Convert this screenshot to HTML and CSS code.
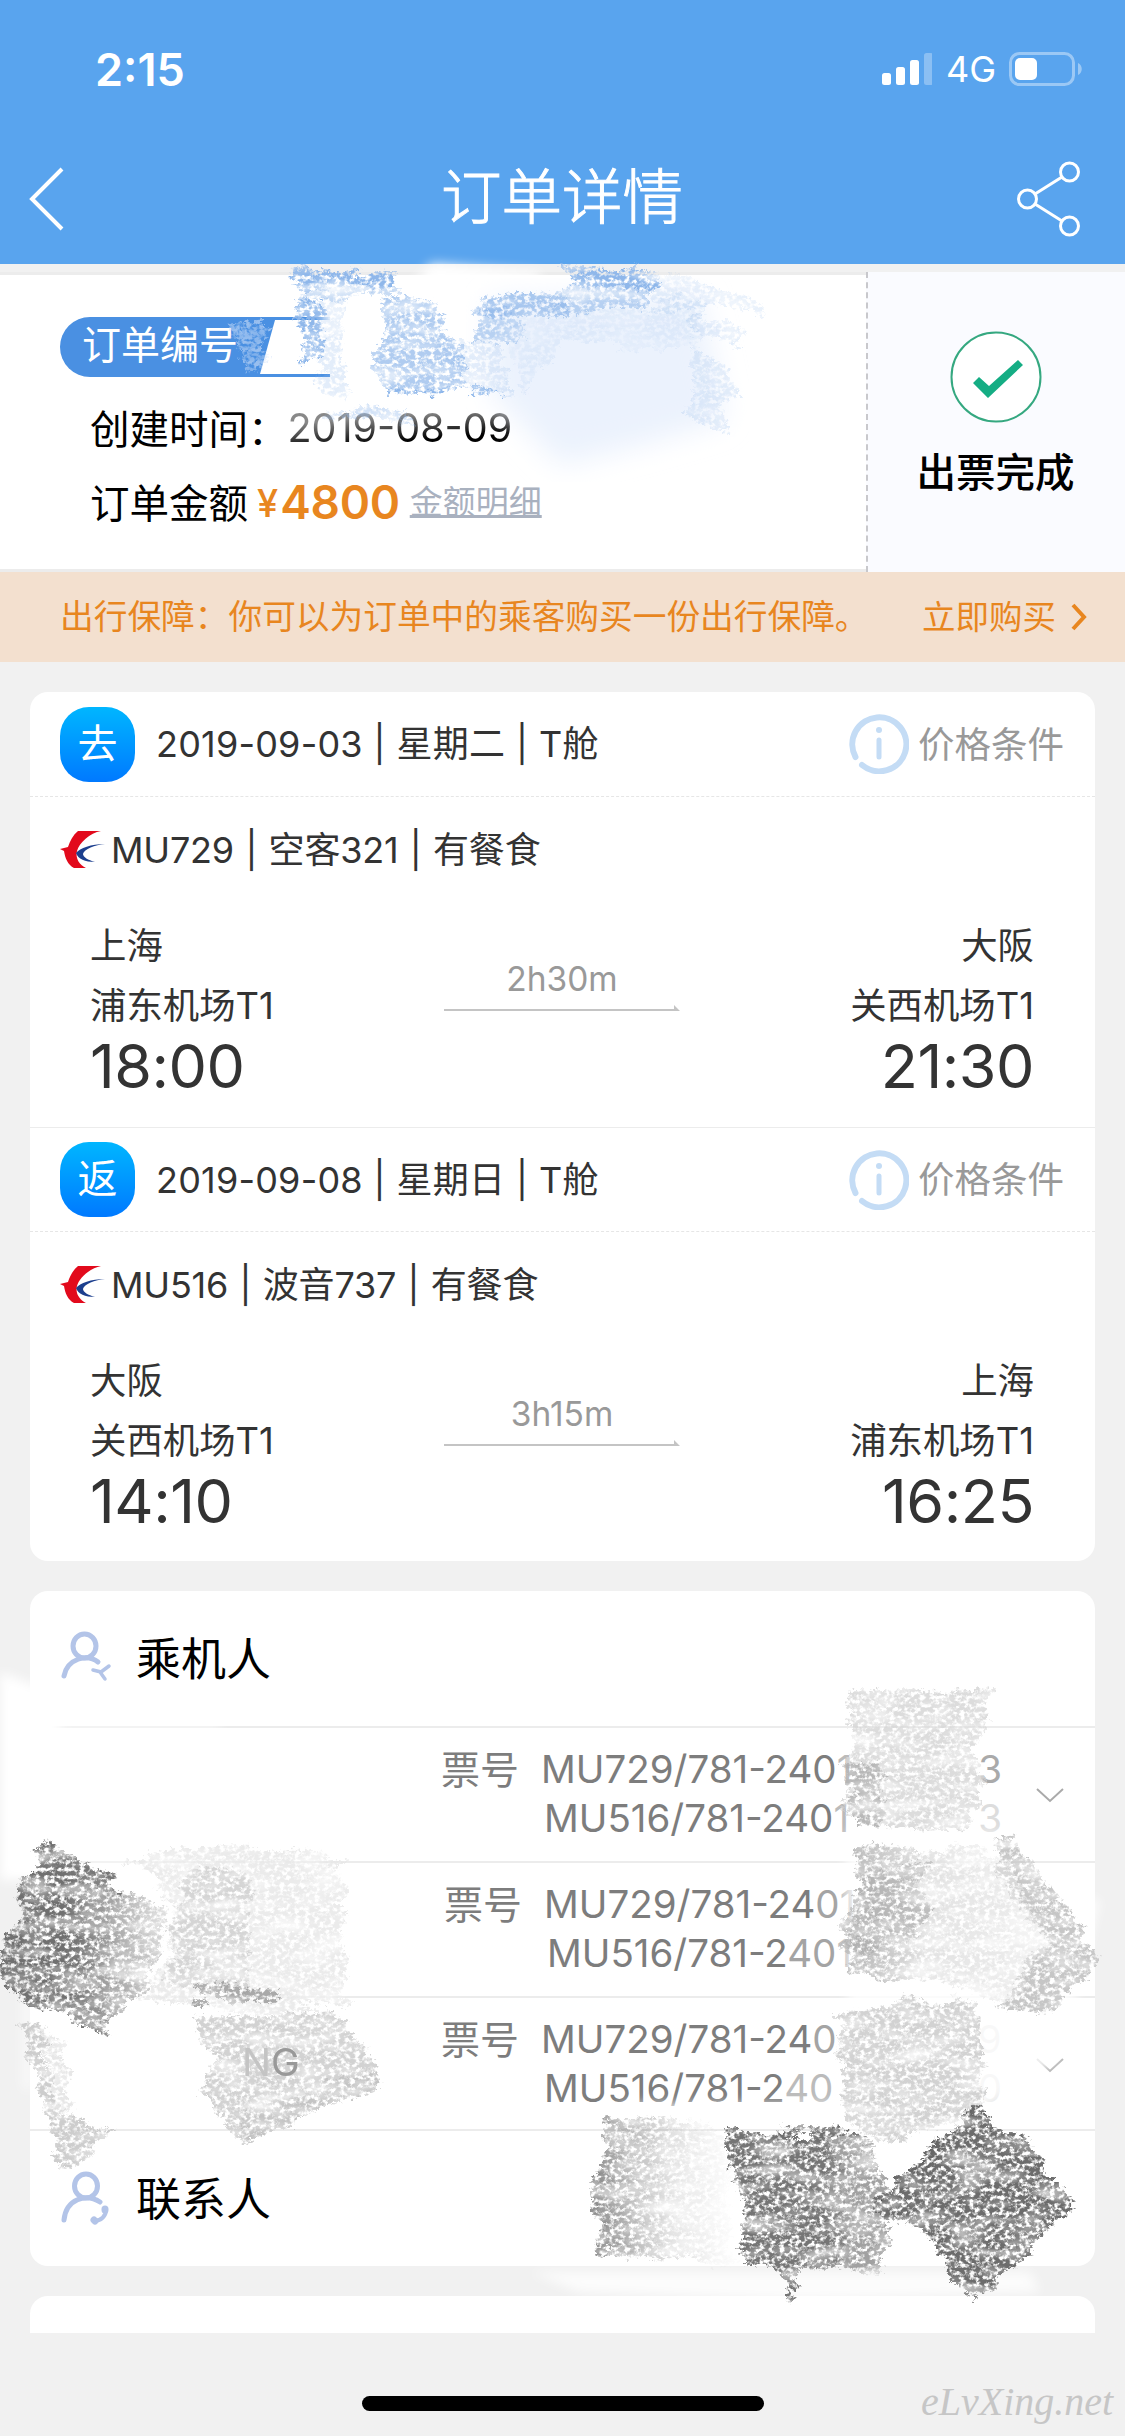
FILE: index.html
```html
<!DOCTYPE html>
<html lang="zh-CN">
<head>
    <meta charset="UTF-8">
    <meta name="viewport" content="width=device-width, initial-scale=1.0">
    <title>订单详情</title>
    <link rel="stylesheet" href="styles.css">
</head>
<body>
    <header class="header">
        <div class="status-bar">
            <span class="status-time">2:15</span>
            <div class="status-icons">
                <svg width="50" height="32" viewBox="0 0 50 32" fill="#fff">
                    <rect x="0" y="20" width="9" height="12" rx="2.5"/>
                    <rect x="14" y="14" width="9" height="18" rx="2.5"/>
                    <rect x="28" y="7" width="9" height="25" rx="2.5"/>
                    <rect x="42" y="0" width="9" height="32" rx="2.5" opacity="0.3"/>
                </svg>
                <span class="status-network">4G</span>
                <svg class="battery" width="74" height="34" viewBox="0 0 74 34">
                    <rect x="1.5" y="1.5" width="63" height="31" rx="9" fill="none" stroke="#fff" stroke-opacity="0.4" stroke-width="3"/>
                    <rect x="6" y="6" width="22" height="22" rx="5" fill="#fff"/>
                    <path d="M69 11c5 2 5 10 0 12z" fill="#fff" opacity="0.4"/>
                </svg>
            </div>
        </div>
        <div class="nav-bar">
            <svg width="36" height="64" viewBox="0 0 36 64" fill="none" stroke="#fff" stroke-width="4">
                <path d="M33 2 3 32l30 30"/>
            </svg>
            <h1>订单详情</h1>
            <svg width="64" height="76" viewBox="0 0 64 76" fill="none" stroke="#fff" stroke-width="3">
                <circle cx="10.500" cy="38" r="9"/>
                <circle cx="52.500" cy="11" r="9"/>
                <circle cx="52.500" cy="65" r="9"/>
                <path d="m18 33 27-17M18 43l27 17"/>
            </svg>
        </div>
    </header>

    <section class="summary">
        <div class="summary-info">
            <div class="order-no"><span>订单编号</span><div class="order-no-value"></div></div>
            <div class="summary-row">创建时间：<span class="created">2019-08-09</span></div>
            <div class="summary-row amount-row">订单金额<span class="yen">¥</span><span class="amount">4800</span><a class="detail-link">金额明细</a></div>
        </div>
        <div class="summary-status">
            <svg width="92" height="92" viewBox="0 0 92 92">
                <circle cx="46" cy="46" r="44.500" fill="#fff" stroke="#35a880" stroke-width="2"/>
                <path d="M23 52l6-6 10 9 29-26 5 5-35 33z" fill="#15ad84"/>
            </svg>
            <strong>出票完成</strong>
        </div>
    </section>

    <div class="insurance">
        <span>出行保障：你可以为订单中的乘客购买一份出行保障。</span>
        <span class="buy">立即购买</span>
        <svg width="16" height="28" viewBox="0 0 16 28" fill="none" stroke="#e8861f" stroke-width="4">
            <path d="m2 2 11 12L2 26"/>
        </svg>
    </div>

    <!-- 航段 -->
    <section class="card">
        <div class="leg">
            <div class="leg-header">
                <span class="badge">去</span>
                <span class="leg-date">2019-09-03 | 星期二 | T舱</span>
                <svg class="info-icon" width="60" height="60" viewBox="0 0 60 60" fill="none" stroke="#c4dcf5" stroke-width="6" stroke-linecap="round">
                    <path d="M6.500 43A27 27 0 1 1 13 51"/>
                    <path d="M30 26v17" stroke-width="5"/>
                    <path d="M30 16v.1"/>
                </svg>
                <span class="price-rule">价格条件</span>
            </div>
            <div class="flight">
                <svg width="46" height="38" viewBox="0 0 46 38">
                    <path d="M18 0h23C30 2 19 12 17 20s3 14 9 17H14C8 34 5 27 4 20l-4-2 8-2C10 10 13 4 18 0z" fill="#e20a1c"/>
                    <path d="M45 13C31 13 20 17 16 22c2 6 9 9 19 9-7-2-12-5-12-8 1-5 12-9 22-10z" fill="#1c3f8e"/>
                </svg>
                <span>MU729 | 空客321 | 有餐食</span>
            </div>
            <div class="route">
                <div class="place">
                    <div class="airport">上海</div>
                    <div class="airport">浦东机场T1</div>
                    <div class="clock">18:00</div>
                </div>
                <div class="duration">
                    <span>2h30m</span>
                    <svg width="236" height="6" viewBox="0 0 236 6" fill="#c4c4c4"><path d="M0 4h230V0l6 6H0z"/></svg>
                </div>
                <div class="place place-to">
                    <div class="airport">大阪</div>
                    <div class="airport">关西机场T1</div>
                    <div class="clock">21:30</div>
                </div>
            </div>
        </div>
        <div class="leg">
            <div class="leg-header">
                <span class="badge">返</span>
                <span class="leg-date">2019-09-08 | 星期日 | T舱</span>
                <svg class="info-icon" width="60" height="60" viewBox="0 0 60 60" fill="none" stroke="#c4dcf5" stroke-width="6" stroke-linecap="round">
                    <path d="M6.500 43A27 27 0 1 1 13 51"/>
                    <path d="M30 26v17" stroke-width="5"/>
                    <path d="M30 16v.1"/>
                </svg>
                <span class="price-rule">价格条件</span>
            </div>
            <div class="flight">
                <svg width="46" height="38" viewBox="0 0 46 38">
                    <path d="M18 0h23C30 2 19 12 17 20s3 14 9 17H14C8 34 5 27 4 20l-4-2 8-2C10 10 13 4 18 0z" fill="#e20a1c"/>
                    <path d="M45 13C31 13 20 17 16 22c2 6 9 9 19 9-7-2-12-5-12-8 1-5 12-9 22-10z" fill="#1c3f8e"/>
                </svg>
                <span>MU516 | 波音737 | 有餐食</span>
            </div>
            <div class="route">
                <div class="place">
                    <div class="airport">大阪</div>
                    <div class="airport">关西机场T1</div>
                    <div class="clock">14:10</div>
                </div>
                <div class="duration">
                    <span>3h15m</span>
                    <svg width="236" height="6" viewBox="0 0 236 6" fill="#c4c4c4"><path d="M0 4h230V0l6 6H0z"/></svg>
                </div>
                <div class="place place-to">
                    <div class="airport">上海</div>
                    <div class="airport">浦东机场T1</div>
                    <div class="clock">16:25</div>
                </div>
            </div>
        </div>
    </section>

    <!-- 乘机人 / 联系人 -->
    <section class="card people">
        <div class="people-title">
            <svg width="52" height="54" viewBox="0 0 52 54" fill="none" stroke="#b3c4e8" stroke-width="5" stroke-linecap="round">
                <ellipse cx="24.500" cy="15" rx="11.500" ry="12"/>
                <path d="M4 45C7 28 27 22 38 31"/>
                <path d="M33 39l8 2 8-6M40 41l5 7" stroke-width="3.500"/>
            </svg>
            <h2>乘机人</h2>
        </div>
        <div class="ticket">
            <span class="ticket-label">票号</span>
            <div class="ticket-no"><div>MU729/781-240<i>1</i></div><div>MU516/781-240<i>1</i></div></div>
            <div class="ticket-tail"><div>3</div><div class="faint">3</div></div>
            <svg width="28" height="15" viewBox="0 0 28 15" fill="none" stroke="#aaa" stroke-width="2"><path d="m1 1 13 12L27 1"/></svg>
        </div>
        <div class="ticket ticket-shift">
            <span class="ticket-label">票号</span>
            <div class="ticket-no"><div>MU729/781-24<em>0</em><i>1</i></div><div>MU516/781-2<em>40</em><i>1</i></div></div>
        </div>
        <div class="ticket">
            <span class="passenger">N<b>G</b></span>
            <span class="ticket-label">票号</span>
            <div class="ticket-no"><div>MU729/781-24<em>0</em></div><div>MU516/781-2<i>40</i></div></div>
            <div class="ticket-tail faint"><div>9</div><div class="faint">0</div></div>
            <svg width="28" height="15" viewBox="0 0 28 15" fill="none" stroke="#aaa" stroke-width="2"><path d="m1 1 13 12L27 1"/></svg>
        </div>
        <div class="people-title">
            <svg width="52" height="54" viewBox="0 0 52 54" fill="none" stroke="#b3c4e8" stroke-width="5" stroke-linecap="round">
                <ellipse cx="26" cy="15" rx="11.500" ry="12"/>
                <path d="M4 49C6 28 26 22 40 31"/>
                <path d="M46 39c0 6-5 11-12 11" stroke-width="4"/>
                <path d="M45 38v1M34 49l1 1" stroke-width="7"/>
            </svg>
            <h2>联系人</h2>
        </div>
    </section>

    <section class="card card-cut"></section>

    <footer>
        <div class="home-bar"></div>
        <span class="watermark">eLvXing.net</span>
    </footer>

    <!-- 涂抹遮挡 -->
    <svg class="smudges" width="1125" height="2436" viewBox="0 0 1125 2436">
        <defs>
            <filter id="chalk" x="-5%" y="-5%" width="110%" height="110%" color-interpolation-filters="sRGB">
                <feTurbulence type="fractalNoise" baseFrequency="0.02 0.06" numOctaves="3" seed="4" result="wide"/>
                <feTurbulence type="fractalNoise" baseFrequency="0.2 0.25" numOctaves="4" seed="7" result="grain"/>
                <feDisplacementMap in="SourceGraphic" in2="wide" scale="26" xChannelSelector="R" yChannelSelector="G" result="edge"/>
                <feDisplacementMap in="edge" in2="grain" scale="12" xChannelSelector="R" yChannelSelector="G" result="edge2"/>
                <feColorMatrix in="grain" values="0 0 0 0 0  0 0 0 0 0  0 0 0 0 0  0 0 0 4 -1.25" result="m1"/>
                <feColorMatrix in="wide" values="0 0 0 0 0  0 0 0 0 0  0 0 0 0 0  0 0 0 1.8 0" result="m2"/>
                <feComposite in="edge2" in2="m1" operator="in" result="c"/>
                <feComposite in="c" in2="m2" operator="in"/>
            </filter>
            <filter id="haze" x="-10%" y="-10%" width="120%" height="120%">
                <feGaussianBlur stdDeviation="6"/>
            </filter>
            <filter id="wash" x="-10%" y="-10%" width="120%" height="120%">
                <feGaussianBlur stdDeviation="14"/>
            </filter>
            <linearGradient id="fadeRight">
                <stop offset="0" stop-opacity="1" stop-color="#858585"/>
                <stop offset="0.5" stop-opacity="0.4" stop-color="#9c9c9c"/>
                <stop offset="1" stop-opacity="0.03" stop-color="#bbb"/>
            </linearGradient>
            <linearGradient id="fadeDark">
                <stop offset="0.4" stop-color="#707070"/>
                <stop offset="1" stop-color="#8a8a8a" stop-opacity="0.3"/>
            </linearGradient>
            <linearGradient id="fadeLight">
                <stop offset="0.1" stop-color="#bdbdbd"/>
                <stop offset="0.6" stop-color="#dcdcdc" stop-opacity="0.7"/>
                <stop offset="1" stop-color="#e6e6e6" stop-opacity="0.3"/>
            </linearGradient>
        </defs>

        <g filter="url(#haze)" fill="#fff">
            <path d="M432 264 540 273V296H400z"/>
            <path d="M320 305H480L500 400 345 408z"/>
            <path d="M0 1672 60 1695V1880H0z"/>
            <path d="M22 1960h10v130H22z" opacity="0.6"/>
            <path d="M530 2272H1030L1040 2292 800 2300 580 2292z" opacity="0.8"/>
            <path d="M220 1725H36V1731H220zM320 1860H36V1866H320zM340 1993H36V2001H340z"/>
            <path d="M60 1688h56v14H60z"/>
            <path d="M620 2105H860V2118H620z"/>
            <path d="M845 1833H1000L1010 1880 1100 1900 1060 2060 980 2112 870 2150H850z" opacity="0.8"/>
        </g>
        <g filter="url(#wash)">
            <path d="M490 300 700 295 725 420 640 445 560 465 490 390z" fill="#ebf2fd"/>
        </g>
        <g filter="url(#chalk)" fill="#8fb7ea">
            <path d="M293 266 395 274 394 284 296 290z"/>
            <path d="M296 285 394 284 394 294 300 300z" opacity="0.5"/>
            <path d="M297 298 315 305 324 345 318 362 302 362 308 340 300 320z" stroke="#8fb7ea" stroke-width="4"/>
            <path d="M318 296 340 298 345 400 320 385z" opacity="0.25"/>
            <path d="M382 297 440 298 445 340 465 350 470 392 382 390 374 345 386 335z" opacity="0.7"/>
            <path d="M440 340 500 345 510 394 460 392z" opacity="0.25"/>
            <path d="M478 297 500 297 525 340 476 345z" opacity="0.6"/>
            <path d="M480 295 575 297 560 318 485 318z" opacity="0.75"/>
            <path d="M560 269 661 268 661 286 590 290 572 284z"/>
            <path d="M572 284 661 286 640 304 570 312 560 300z" opacity="0.6"/>
            <path d="M661 270 720 285 760 305 758 312 720 305 650 310z" opacity="0.2"/>
            <path d="M690 312 745 330 738 348 700 345z" opacity="0.25"/>
            <path d="M690 345 727 365 735 395 720 410 728 432 710 432 690 420z" opacity="0.22"/>
            <path d="M500 318 700 300 700 350 560 345 520 390z" opacity="0.14"/>
            <path d="M325 408 400 412 425 425 330 418z" opacity="0.4"/>
            <path d="M382 388 500 394V397L382 394z"/>
        </g>
        <g filter="url(#chalk)" fill="#cfe0f8">
            <path d="M226 325 272 320 258 377 248 372z" opacity="0.6"/>
        </g>

        <g filter="url(#chalk)">
            <path d="M34 1847 43 1842 125 1890 165 1910 158 1950 148 1985 125 2000 112 2020 108 2035 60 2012 15 1995 0 1970 3 1940 25 1910 18 1885 36 1870z" fill="url(#fadeDark)"/>
            <path d="M36 1844 125 1890 123 1897 38 1858z" fill="#777"/>
            <path d="M14 1990 108 2026 108 2035 60 2014z" fill="#777"/>
            <path d="M175 1845 300 1848 342 1865 345 1990 350 2005 250 2012 190 1998 133 2002 165 1970 170 1910 150 1870 122 1868z" fill="#e6e6e6" opacity="0.8"/>
            <path d="M190 1870 250 1875 248 1990 170 1985 172 1910z" fill="#ccc" opacity="0.7"/>
            <path d="M190 1985 275 1986 280 2000 195 2000z" fill="#999" opacity="0.8"/>
            <path d="M20 2028 40 2022 45 2060 62 2115 118 2130 95 2150 72 2168 60 2168 42 2100z" fill="#c0c0c0" opacity="0.8"/>
            <path d="M40 2030 62 2040 75 2110 60 2115z" fill="#ddd" opacity="0.7"/>
            <path d="M190 2018 330 2010 365 2050 382 2085 330 2105 247 2142 222 2113 205 2090 215 2060z" fill="#d2d2d2"/>
            <path d="M240 2115 375 2072 382 2085 330 2105 247 2142z" fill="#c4c4c4"/>
            <path d="M845 1692 950 1687 990 1692 985 1730 975 1755 985 1780 970 1828 855 1830 842 1795 855 1740z" fill="#d6d6d6" opacity="0.85"/>
            <path d="M842 1760 880 1765 882 1825 855 1830z" fill="#aaa" opacity="0.7"/>
            <path d="M855 1843 960 1848 1010 1860 1005 1985 850 1978 842 1930 860 1880z" fill="url(#fadeLight)"/>
            <path d="M860 1870 928 1865 920 1935 850 1950z" fill="#aaa" opacity="0.6"/>
            <path d="M1000 1840 1013 1838 1097 1955 1085 1975 1072 1995 1055 2010 1000 2012 1030 1960 1045 1940 995 1870z" fill="#c0c0c0" opacity="0.9"/>
            <path d="M920 1870 1010 1860 1050 1950 1010 2005 930 1980z" fill="#e2e2e2" opacity="0.6"/>
            <path d="M840 2015 905 1998 975 2005 980 2060 983 2110 900 2140 845 2120z" fill="#cdcdcd" opacity="0.9"/>
            <path d="M603 2115 710 2121 725 2150 730 2265 597 2250 600 2230 587 2180 607 2160z" fill="url(#fadeRight)"/>
            <path d="M726 2131 820 2133 845 2180 842 2225 840 2270 800 2273 792 2305 782 2270 740 2260 742 2225 745 2190 730 2180z" fill="#757575"/>
            <path d="M820 2133 872 2133 885 2180 890 2225 885 2275 840 2272z" fill="#8a8a8a" opacity="0.8"/>
            <path d="M726 2131 870 2133 870 2139 728 2141z" fill="#6f6f6f"/>
            <path d="M978 2107 1000 2130 1036 2143 1045 2170 1077 2195 1005 2275 980 2297 965 2290 940 2260 940 2240 910 2230 875 2215 877 2205z" fill="#6c6c6c"/>
            <path d="M980 2107 875 2213 880 2200z" stroke="#666" stroke-width="5"/>
        </g>
    </svg>
</body>
</html>
```
FILE: styles.css
```css
:root {
    --blue: #59a4ee;
    --orange: #e8861f;
    --bg: #f1f1f1;
    --line: #ececec;
}

* {
    box-sizing: border-box;
}

body {
    margin: 0;
    width: 1125px;
    height: 2436px;
    overflow: hidden;
    position: relative;
    background: var(--bg);
    color: #333;
    font-family: Inter, "Noto Sans CJK SC", sans-serif;
    font-size: 36px;
}

svg {
    flex: none;
}

.header {
    height: 264px;
    background: var(--blue);
    color: #fff;
}

.status-bar {
    display: flex;
    justify-content: space-between;
    align-items: center;
    height: 138px;
    padding: 0 42px 0 95px;
}

.status-time {
    font-size: 45px;
    font-weight: 600;
}

.status-icons {
    display: flex;
    align-items: center;
}

.status-network {
    margin: 0 14px 0 14px;
    width: 49px;
    font-size: 36px;
    font-weight: 400;
}

.nav-bar {
    display: flex;
    justify-content: space-between;
    align-items: center;
    height: 122px;
    padding: 0 45px 0 29px;
}

.nav-bar h1 {
    margin: 0 0 5px 42px;
    font-size: 60.500px;
    font-weight: 300;
    line-height: 90px;
    -webkit-text-stroke: 1px #fff;
}

.nav-bar svg:last-child {
    margin-right: -1px;
}

.summary {
    display: flex;
    height: 300px;
    margin-top: 8px;
}

.summary-info {
    flex: 1;
    padding: 42px 0 0 60px;
    background: #fff;
    border: solid var(--line);
    border-width: 3px 0;
    color: #000;
    font-size: 39.500px;
}

.order-no {
    display: flex;
    width: 270px;
    height: 60px;
    padding: 3px 0 3px 22px;
    border-radius: 30px 0 0 30px;
    background: #4a90e2;
    color: #fff;
    font-size: 39px;
    line-height: 50px;
}

.order-no span {
    width: 178px;
}

.order-no-value {
    flex: 1;
    background: #fff;
    clip-path: polygon(15px 0, 100% 0, 100% 100%, 0 100%);
}

.summary-row {
    display: flex;
    align-items: center;
    height: 74px;
    margin-top: 12px;
    padding-left: 30px;
    white-space: nowrap;
}

.amount-row {
    margin-top: 0;
}

.created {
    background: linear-gradient(175deg, #888 30%, #000 70%);
    background-clip: text;
    -webkit-background-clip: text;
    color: transparent;
    margin-top: 3px;
    letter-spacing: 0;
}

.yen {
    margin: 5px 2px 0 9px;
    color: var(--orange);
    font-size: 38px;
    font-weight: 500;
}

.amount {
    margin-top: 4px;
    color: var(--orange);
    font-size: 46px;
    font-weight: 600;
    letter-spacing: -0.3px;
}

.detail-link {
    margin-left: 10px;
    color: #a9b1bf;
    font-size: 33px;
    text-decoration: underline;
    text-underline-offset: 1px;
}

.summary-status {
    display: flex;
    flex-direction: column;
    align-items: center;
    width: 259px;
    padding: 59px 2px 0 0;
    border-left: 2px dashed #c8c8cc;
    background: #fafbff;
    color: #000;
}

.summary-status strong {
    margin-top: 18px;
    font-size: 39.500px;
    font-weight: 500;
}

.insurance {
    display: flex;
    align-items: center;
    height: 90px;
    padding: 0 38px 5px 60px;
    background: #f3e0cf;
    color: var(--orange);
    font-size: 33.700px;
    white-space: nowrap;
}

.insurance svg {
    margin-top: 4px;
}

.insurance .buy {
    margin-left: auto;
    margin-right: 15px;
    font-size: 33.500px;
}

.card {
    margin: 30px 30px 0;
    border-radius: 18px;
    background: #fff;
}

.leg {
    height: 435px;
}

.leg + .leg {
    height: 434px;
    border-top: 1px solid var(--line);
}

.leg-header {
    display: flex;
    align-items: center;
    height: 105px;
    padding: 0 31px 0 30px;
    border-bottom: 1px dashed #e6e6e6;
}

.leg + .leg .leg-header {
    height: 104px;
}

.badge {
    width: 75px;
    height: 75px;
    border-radius: 29px;
    background: linear-gradient(#00b6ff, #0079ff);
    color: #fff;
    font-size: 40px;
    line-height: 74px;
    text-align: center;
}

.leg-date {
    margin: 0 0 6px 21px;
    letter-spacing: 0.2px;
    word-spacing: 0.5px;
}

.info-icon {
    margin-left: auto;
}

.price-rule {
    margin: 0 0 4px 9px;
    color: #999;
    font-size: 36.500px;
}

.flight {
    display: flex;
    align-items: center;
    gap: 5px;
    height: 105px;
    padding-left: 30px;
}

.flight span {
    margin-bottom: 6px;
    letter-spacing: -0.2px;
    word-spacing: 1.5px;
}

.route {
    display: flex;
    justify-content: space-between;
    padding: 16px 61px 0 60px;
}

.place {
    width: 300px;
    font-size: 36.400px;
}

.place-to {
    text-align: right;
}

.airport {
    height: 60px;
    line-height: 56px;
}

.clock {
    margin-top: -2px;
    font-size: 61px;
    line-height: 60px;
    letter-spacing: -0.5px;
}

.duration {
    display: flex;
    flex-direction: column;
    align-items: center;
    width: 236px;
    padding-top: 38px;
    color: #999;
    font-size: 33.500px;
    line-height: 46px;
}

.duration svg {
    margin-top: 3px;
}

.people-title {
    display: flex;
    align-items: center;
    height: 135px;
    padding: 0 0 5px 30px;
}

.people-title svg {
    margin-top: 3px;
}

.people-title h2 {
    margin: 0 0 0 24px;
    color: #000;
    font-size: 45px;
    font-weight: 400;
}

.ticket {
    position: relative;
    display: flex;
    height: 135px;
    padding: 17px 31px 0 411px;
    border-top: 2px solid var(--line);
    color: #7d7d7d;
    font-size: 38.500px;
    line-height: 49px;
    white-space: nowrap;
}

.ticket:nth-last-child(2) {
    border-bottom: 2px solid var(--line);
}

.ticket-shift {
    padding-left: 414px;
}

.ticket-label {
    width: 100px;
    font-size: 39px;
}

.ticket-no div:last-child {
    padding-left: 3px;
}

.ticket-no i {
    font-style: normal;
    color: #bbb;
}

.ticket-no em {
    font-style: normal;
    color: #a4a4a4;
}

.ticket-tail {
    margin-left: auto;
    color: #aaa;
}

.faint {
    color: #ddd;
}

.ticket svg {
    margin: 43px 0 0 34px;
}

.passenger {
    position: absolute;
    z-index: 1;
    left: 212px;
    top: 40px;
    color: #c4c4c4;
}

.passenger b {
    color: #999;
    font-weight: 400;
}

.card-cut {
    height: 37px;
    border-radius: 18px 18px 0 0;
}

footer {
    display: flex;
    justify-content: flex-end;
    height: 102px;
}

.home-bar {
    width: 402px;
    height: 15px;
    margin: 63px 157px 0 0;
    border-radius: 8px;
    background: #000;
}

.watermark {
    width: 204px;
    margin-top: 45px;
    color: #c6c6c6;
    font: italic 40px "Liberation Serif", serif;
}

.smudges {
    position: absolute;
    left: 0;
    top: 0;
    pointer-events: none;
}
```
